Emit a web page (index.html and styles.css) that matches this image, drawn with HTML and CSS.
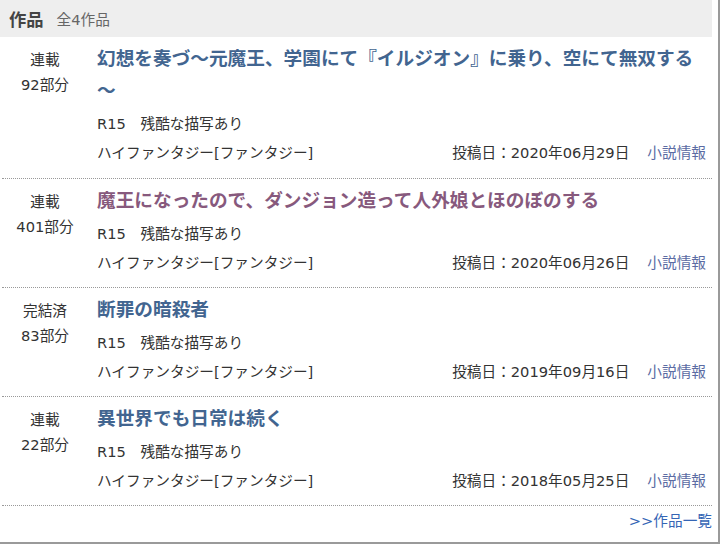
FILE: index.html
```html
<!DOCTYPE html>
<html lang="ja">
<head>
    <meta charset="UTF-8">
    <title>作品</title>
    <link rel="stylesheet" href="styles.css">
</head>
<body>

<div class="works">
    <div class="works_head">
        <span class="works_title">作品</span>
        <span class="works_count">全4作品</span>
    </div>

    <div class="works_list">
        <!-- 1 -->
        <div class="work">
            <div class="work_status">連載<br>92部分</div>
            <div class="work_body">
                <a class="work_name" href="#">幻想を奏づ～元魔王、学園にて『イルジオン』に乗り、空にて無双する～</a>
                <div class="work_line">R15　残酷な描写あり</div>
                <div class="work_line work_info">
                    <span>ハイファンタジー[ファンタジー]</span>
                    <span class="work_right">投稿日：2020年06月29日<a class="info_link" href="#">小説情報</a></span>
                </div>
            </div>
        </div>

        <!-- 2 -->
        <div class="work">
            <div class="work_status">連載<br>401部分</div>
            <div class="work_body">
                <a class="work_name visited" href="#">魔王になったので、ダンジョン造って人外娘とほのぼのする</a>
                <div class="work_line">R15　残酷な描写あり</div>
                <div class="work_line work_info">
                    <span>ハイファンタジー[ファンタジー]</span>
                    <span class="work_right">投稿日：2020年06月26日<a class="info_link" href="#">小説情報</a></span>
                </div>
            </div>
        </div>

        <!-- 3 -->
        <div class="work">
            <div class="work_status">完結済<br>83部分</div>
            <div class="work_body">
                <a class="work_name" href="#">断罪の暗殺者</a>
                <div class="work_line">R15　残酷な描写あり</div>
                <div class="work_line work_info">
                    <span>ハイファンタジー[ファンタジー]</span>
                    <span class="work_right">投稿日：2019年09月16日<a class="info_link" href="#">小説情報</a></span>
                </div>
            </div>
        </div>

        <!-- 4 -->
        <div class="work">
            <div class="work_status">連載<br>22部分</div>
            <div class="work_body">
                <a class="work_name" href="#">異世界でも日常は続く</a>
                <div class="work_line">R15　残酷な描写あり</div>
                <div class="work_line work_info">
                    <span>ハイファンタジー[ファンタジー]</span>
                    <span class="work_right">投稿日：2018年05月25日<a class="info_link" href="#">小説情報</a></span>
                </div>
            </div>
        </div>

        <div class="works_more">
            <a href="#">&gt;&gt;作品一覧</a>
        </div>
    </div>
</div>

</body>
</html>
```

FILE: styles.css
```css
body {
    margin: 0;
    padding: 0;
    background-color: #ffffff;
    color: #333333;
    font-family: "DejaVu Sans", "Noto Sans CJK JP", sans-serif;
    font-size: 14.67px;
}

a {
    text-decoration: none;
}

/* 外枠 */
.works {
    box-sizing: border-box;
    width: 720px;
    height: 544px;
    padding-right: 6px;
    border-right: 2px solid #9a9a9a;
    border-bottom: 2px solid #9a9a9a;
}

.works_head {
    height: 37px;
    background-color: #eeeeee;
    display: flex;
    align-items: center;
    padding-left: 9px;
}

.works_title {
    font-size: 17.3px;
    font-weight: bold;
    color: #444444;
    margin-right: 13px;
}

.works_count {
    color: #666666;
}

.works_list {
    padding-left: 2px;
}

/* 各作品 */
.work {
    display: grid;
    grid-template-columns: 86px 1fr;
    column-gap: 9px;
    padding: 6px 0 10px;
    border-bottom: 1px dotted #999999;
}

.work:first-child {
    padding-bottom: 11px;
}

.work_status {
    text-align: center;
    line-height: 25px;
    padding-top: 4px;
}

.work_body {
    padding-right: 6px;
}

.work_name {
    display: block;
    font-size: 18.67px;
    font-weight: bold;
    line-height: 32px;
    color: #426590;
    margin-bottom: 2px;
}

.work_name.visited {
    color: #87597d;
}

.work_line {
    line-height: 29px;
}

.work_info {
    display: flex;
    justify-content: space-between;
}

.info_link {
    color: #5b6ba3;
    margin-left: 18px;
}

.works_more {
    text-align: right;
    line-height: 24px;
    padding-top: 3px;
}

.works_more a {
    color: #3565b5;
}
```
